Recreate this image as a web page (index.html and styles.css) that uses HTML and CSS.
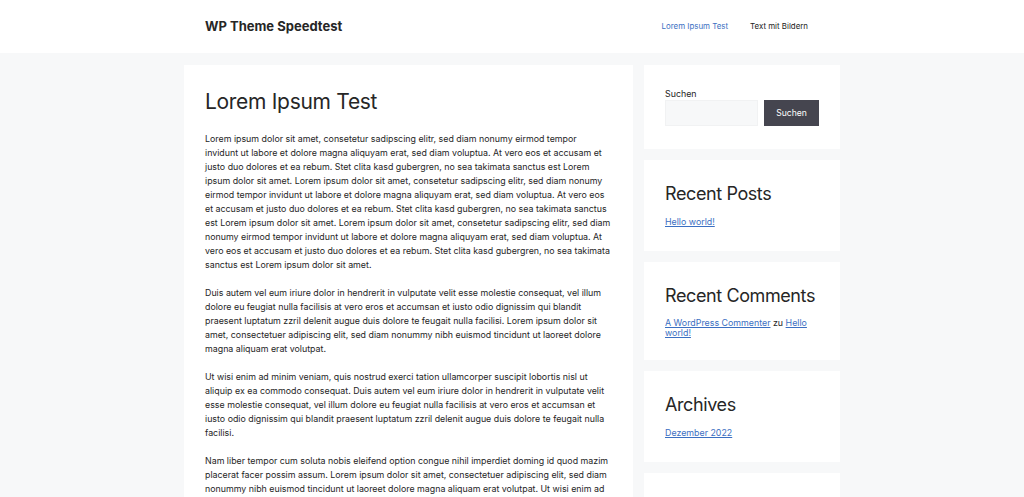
FILE: index.html
```html
<!DOCTYPE html>
<html lang="de">
<head>
<meta charset="UTF-8" />
<meta name="viewport" content="width=device-width, initial-scale=1" />
<title>Lorem Ipsum Test – WP Theme Speedtest</title>
<link rel="stylesheet" href="styles.css">
</head>
<body>
  <header class="site-header">
    <div class="inside-header">
      <div class="site-title">WP Theme Speedtest</div>
      <nav class="main-nav">
        <a href="#" class="current">Lorem Ipsum Test</a>
        <a href="#">Text mit Bildern</a>
      </nav>
    </div>
  </header>

  <div class="site-content">
    <main class="content-area">
      <article class="inside-article">
        <h1 class="entry-title">Lorem Ipsum Test</h1>
        <div class="entry-content">
          <p>Lorem ipsum dolor sit amet, consetetur sadipscing elitr, sed diam nonumy eirmod tempor invidunt ut labore et dolore magna aliquyam erat, sed diam voluptua. At vero eos et accusam et justo duo dolores et ea rebum. Stet clita kasd gubergren, no sea takimata sanctus est Lorem ipsum dolor sit amet. Lorem ipsum dolor sit amet, consetetur sadipscing elitr, sed diam nonumy eirmod tempor invidunt ut labore et dolore magna aliquyam erat, sed diam voluptua. At vero eos et accusam et justo duo dolores et ea rebum. Stet clita kasd gubergren, no sea takimata sanctus est Lorem ipsum dolor sit amet. Lorem ipsum dolor sit amet, consetetur sadipscing elitr, sed diam nonumy eirmod tempor invidunt ut labore et dolore magna aliquyam erat, sed diam voluptua. At vero eos et accusam et justo duo dolores et ea rebum. Stet clita kasd gubergren, no sea takimata sanctus est Lorem ipsum dolor sit amet.</p>
          <p>Duis autem vel eum iriure dolor in hendrerit in vulputate velit esse molestie consequat, vel illum dolore eu feugiat nulla facilisis at vero eros et accumsan et iusto odio dignissim qui blandit praesent luptatum zzril delenit augue duis dolore te feugait nulla facilisi. Lorem ipsum dolor sit amet, consectetuer adipiscing elit, sed diam nonummy nibh euismod tincidunt ut laoreet dolore magna aliquam erat volutpat.</p>
          <p>Ut wisi enim ad minim veniam, quis nostrud exerci tation ullamcorper suscipit lobortis nisl ut aliquip ex ea commodo consequat. Duis autem vel eum iriure dolor in hendrerit in vulputate velit esse molestie consequat, vel illum dolore eu feugiat nulla facilisis at vero eros et accumsan et iusto odio dignissim qui blandit praesent luptatum zzril delenit augue duis dolore te feugait nulla facilisi.</p>
          <p>Nam liber tempor cum soluta nobis eleifend option congue nihil imperdiet doming id quod mazim placerat facer possim assum. Lorem ipsum dolor sit amet, consectetuer adipiscing elit, sed diam nonummy nibh euismod tincidunt ut laoreet dolore magna aliquam erat volutpat. Ut wisi enim ad minim veniam, quis nostrud exerci tation ullamcorper suscipit lobortis nisl ut aliquip ex ea commodo consequat.</p>
        </div>
      </article>
    </main>

    <aside class="sidebar">
      <section class="widget widget-search">
        <label class="search-label" for="s">Suchen</label>
        <form class="search-form">
          <input type="search" id="s" class="search-field">
          <button type="button" class="search-btn">Suchen</button>
        </form>
      </section>
      <section class="widget">
        <h2 class="widget-title">Recent Posts</h2>
        <a href="#">Hello world!</a>
      </section>
      <section class="widget">
        <h2 class="widget-title">Recent Comments</h2>
        <p><a href="#">A WordPress Commenter</a> zu <a href="#">Hello world!</a></p>
      </section>
      <section class="widget">
        <h2 class="widget-title">Archives</h2>
        <a href="#">Dezember 2022</a>
      </section>
      <section class="widget">
        <h2 class="widget-title">Categories</h2>
        <a href="#">Uncategorized</a>
      </section>
    </aside>
  </div>
</body>
</html>
```

FILE: styles.css
```css
body {
  font-family: Inter, "Liberation Sans", sans-serif;
  font-size: 8.85px;
  line-height: 14px;
  background: #f7f8f9;
  color: #262626;
  margin: 0;
}
a {
  color: #3b6fc2;
}
p {
  margin: 0 0 14px;
}

.site-header {
  background: #fff;
}
.inside-header {
  max-width: 614px;
  margin: 0 auto;
  padding: 10px 21px;
  display: flex;
  align-items: center;
  justify-content: space-between;
}
.site-title {
  font-size: 13px;
  font-weight: 700;
  line-height: 33px;
}
.main-nav {
  display: flex;
}
.main-nav a {
  font-size: 7.9px;
  line-height: 33px;
  padding: 0 11px;
  color: #222222;
  text-decoration: none;
}
.main-nav a:last-child {
  padding-right: 0;
  margin-right: 11px;
}
.main-nav a.current {
  color: #3b6fc2;
}

.site-content {
  max-width: 656px;
  margin: 12px auto 0;
  display: flex;
  gap: 11px;
  align-items: flex-start;
}
.content-area {
  width: 449px;
  flex-shrink: 0;
}
.inside-article {
  background: #fff;
  padding: 23px 21px 22px;
}
.entry-title {
  font-size: 21px;
  font-weight: 400;
  letter-spacing: -0.3px;
  line-height: 28px;
  margin: 0 0 16px;
}

.sidebar {
  flex: 1;
}
.widget {
  background: #fff;
  padding: 23px 21px 22px;
  margin-bottom: 11px;
}
.widget-search {
  padding: 22px 21px 23px;
}
.widget p {
  margin: 0;
  padding-top: 1px;
  line-height: 10px;
}
.widget-title {
  font-size: 18px;
  font-weight: 400;
  letter-spacing: -0.4px;
  line-height: 22px;
  margin: 0 0 10px;
  white-space: nowrap;
}
.search-label {
  display: block;
  line-height: 13px;
}
.search-form {
  display: flex;
  gap: 6px;
}
.search-field {
  width: 93px;
  height: 26px;
  box-sizing: border-box;
  border: 1px solid #f1f2f3;
  background: #f7f8f9;
  padding: 0 6px;
}
.search-btn {
  height: 26px;
  width: 55px;
  border: none;
  background: #45454f;
  color: #fff;
  font-family: inherit;
  font-size: 8.6px;
}
```
